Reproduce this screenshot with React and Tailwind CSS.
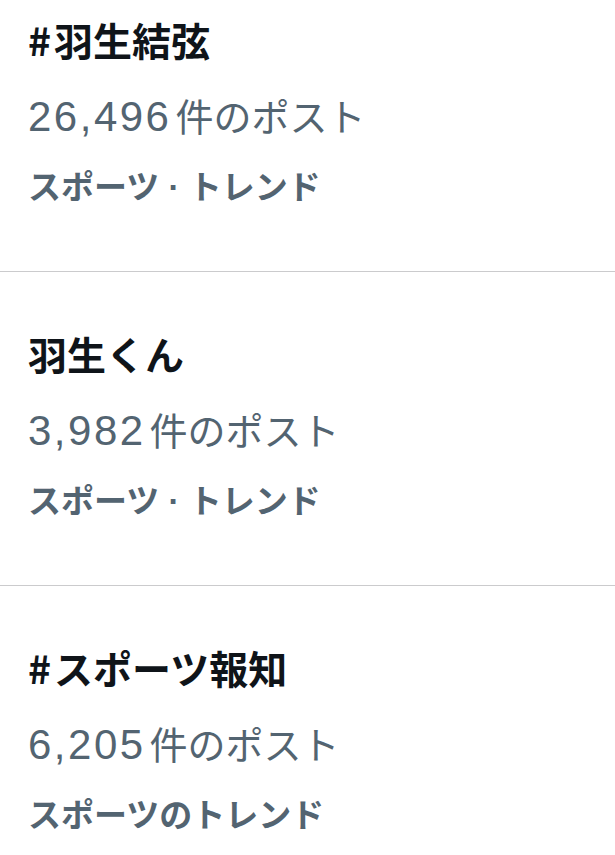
import React from "react";

const trends = [
    { tag: true, title: "羽生結弦", posts: "26,496", category: "スポーツ · トレンド" },
    { tag: false, title: "羽生くん", posts: "3,982", category: "スポーツ · トレンド" },
    { tag: true, title: "スポーツ報知", posts: "6,205", category: "スポーツのトレンド" },
];

export default function App() {
    return (
        <div
            className="min-h-screen w-[615px] bg-white overflow-hidden"
            style={{ fontFamily: '"Liberation Sans", "Noto Sans CJK JP", sans-serif' }}
        >
            {trends.map((t, i) => {
                const last = i === trends.length - 1;
                return (
                    <div
                        key={i}
                        className={`pl-[28px] ${i === 0 ? "pt-[6px]" : "pt-[48px]"} ${last ? "pb-0" : "pb-[51px] border-b border-[#cbcbcd]"}`}
                    >
                        {/* Trend title */}
                        <div className="h-[74px] text-[39px] leading-[74px] font-bold text-[#0f1419] whitespace-nowrap">
                            {t.tag && (
                                <span className="mr-[3px] leading-none" style={{ fontFamily: '"Noto Sans CJK JP", sans-serif' }}>#</span>
                            )}
                            {t.title}
                        </div>
                        <div className="h-[76px] text-[38px] leading-[76px] text-[#536471] whitespace-nowrap">
                            <span className="text-[42px] leading-none tracking-[2.5px] mr-[4px]">{t.posts}</span>
                            件のポスト
                        </div>
                        <div className="h-[64px] text-[33px] leading-[64px] font-bold text-[#536471] whitespace-nowrap">{t.category}</div>
                    </div>
                );
            })}
        </div>
    );
}
